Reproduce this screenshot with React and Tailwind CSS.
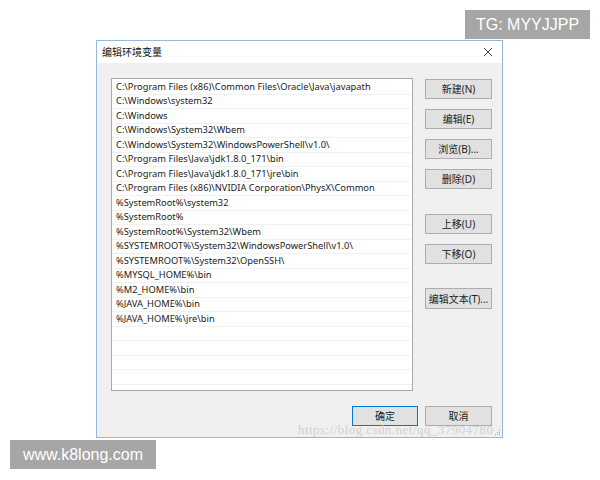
import React from 'react';

const paths = [
  'C:\\Program Files (x86)\\Common Files\\Oracle\\Java\\javapath',
  'C:\\Windows\\system32',
  'C:\\Windows',
  'C:\\Windows\\System32\\Wbem',
  'C:\\Windows\\System32\\WindowsPowerShell\\v1.0\\',
  'C:\\Program Files\\Java\\jdk1.8.0_171\\bin',
  'C:\\Program Files\\Java\\jdk1.8.0_171\\jre\\bin',
  'C:\\Program Files (x86)\\NVIDIA Corporation\\PhysX\\Common',
  '%SystemRoot%\\system32',
  '%SystemRoot%',
  '%SystemRoot%\\System32\\Wbem',
  '%SYSTEMROOT%\\System32\\WindowsPowerShell\\v1.0\\',
  '%SYSTEMROOT%\\System32\\OpenSSH\\',
  '%MYSQL_HOME%\\bin',
  '%M2_HOME%\\bin',
  '%JAVA_HOME%\\bin',
  '%JAVA_HOME%\\jre\\bin',
  '', '', '', '',
];

const font = { fontFamily: '"Noto Sans", "Noto Sans CJK SC", sans-serif' };

const Btn = ({ children, className = '' }) => (
  <button className={`w-[67px] h-[20px] bg-[#e1e1e1] border border-[#adadad] text-[10px] text-[#222] flex items-center justify-center leading-none ${className}`}>
    {children}
  </button>
);

const App = () => {
  return (
    <div className="relative w-[600px] h-[480px] bg-white overflow-hidden pt-[40px] pl-[96px]" style={font}>
      {/* dialog */}
      <div className="relative w-[407px] h-[398px] border border-[#93b9de] bg-[#f0f0f0] flex flex-col">
        <div className="h-[22px] bg-white flex items-center justify-between pl-[5px] pr-[9px] shrink-0">
          <span className="text-[10px] text-[#111]">编辑环境变量</span>
          <svg width="10" height="10" viewBox="0 0 10 10" className="text-[#333]">
            <path d="M1 1 L9 9 M9 1 L1 9" stroke="currentColor" strokeWidth="0.9" />
          </svg>
        </div>

        <div className="flex pl-[14px] pt-[15px] gap-[12px]">
          <div className="w-[302px] h-[313px] bg-white border border-[#a9a9a9] overflow-hidden pt-[1px]">
            {paths.map((p, i) => (
              <div key={i} className="h-[14.5px] border-b border-[#f1f1f1] pl-[4px] flex items-center text-[9.3px] text-[#1a1a1a] whitespace-nowrap">
                {p}
              </div>
            ))}
          </div>

          <div className="flex flex-col pt-[1px]">
            <Btn>新建(N)</Btn>
            <Btn className="mt-[10px]">编辑(E)</Btn>
            <Btn className="mt-[10px]">浏览(B)...</Btn>
            <Btn className="mt-[10px]">删除(D)</Btn>
            <Btn className="mt-[25px]">上移(U)</Btn>
            <Btn className="mt-[10px]">下移(O)</Btn>
            <Btn className="mt-[24px] h-[21px]">编辑文本(T)...</Btn>
          </div>
        </div>

        <div className="flex justify-end gap-[7px] pr-[10px] mt-[15px]">
          <button className="w-[66px] h-[20px] bg-[#e1e1e1] border border-[#0078d7] text-[10px] text-[#222] flex items-center justify-center">确定</button>
          <Btn>取消</Btn>
        </div>

        {/* watermark */}
        <span
          className="absolute left-[201px] top-[379px] text-[13px] text-[#c8c8c8] opacity-75 whitespace-nowrap tracking-[0.45px]"
          style={{ fontFamily: '"Liberation Serif", serif' }}
        >
          https://blog.csdn.net/qq_37904780
        </span>

        {/* resize grip */}
        <svg className="absolute right-[1px] bottom-[1px]" width="8" height="8" viewBox="0 0 8 8">
          <rect x="6" y="2" width="1" height="1" fill="#a0a0a0" />
          <rect x="4" y="4" width="1" height="1" fill="#a0a0a0" />
          <rect x="6" y="4" width="1" height="1" fill="#a0a0a0" />
          <rect x="2" y="6" width="1" height="1" fill="#a0a0a0" />
          <rect x="4" y="6" width="1" height="1" fill="#a0a0a0" />
          <rect x="6" y="6" width="1" height="1" fill="#a0a0a0" />
        </svg>
      </div>

      {/* overlays */}
      <div
        className="absolute left-[465px] top-[10px] w-[125px] h-[29px] bg-[#a6a6a6] text-white text-[16px] flex items-center justify-center"
        style={{ fontFamily: '"Liberation Sans", Arial, sans-serif' }}
      >
        TG: MYYJJPP
      </div>
      <div
        className="absolute left-[10px] top-[440px] w-[146px] h-[29px] bg-[#a6a6a6] text-white text-[16px] flex items-center justify-center"
        style={{ fontFamily: '"Liberation Sans", Arial, sans-serif' }}
      >
        www.k8long.com
      </div>
    </div>
  );
};

export default App;
